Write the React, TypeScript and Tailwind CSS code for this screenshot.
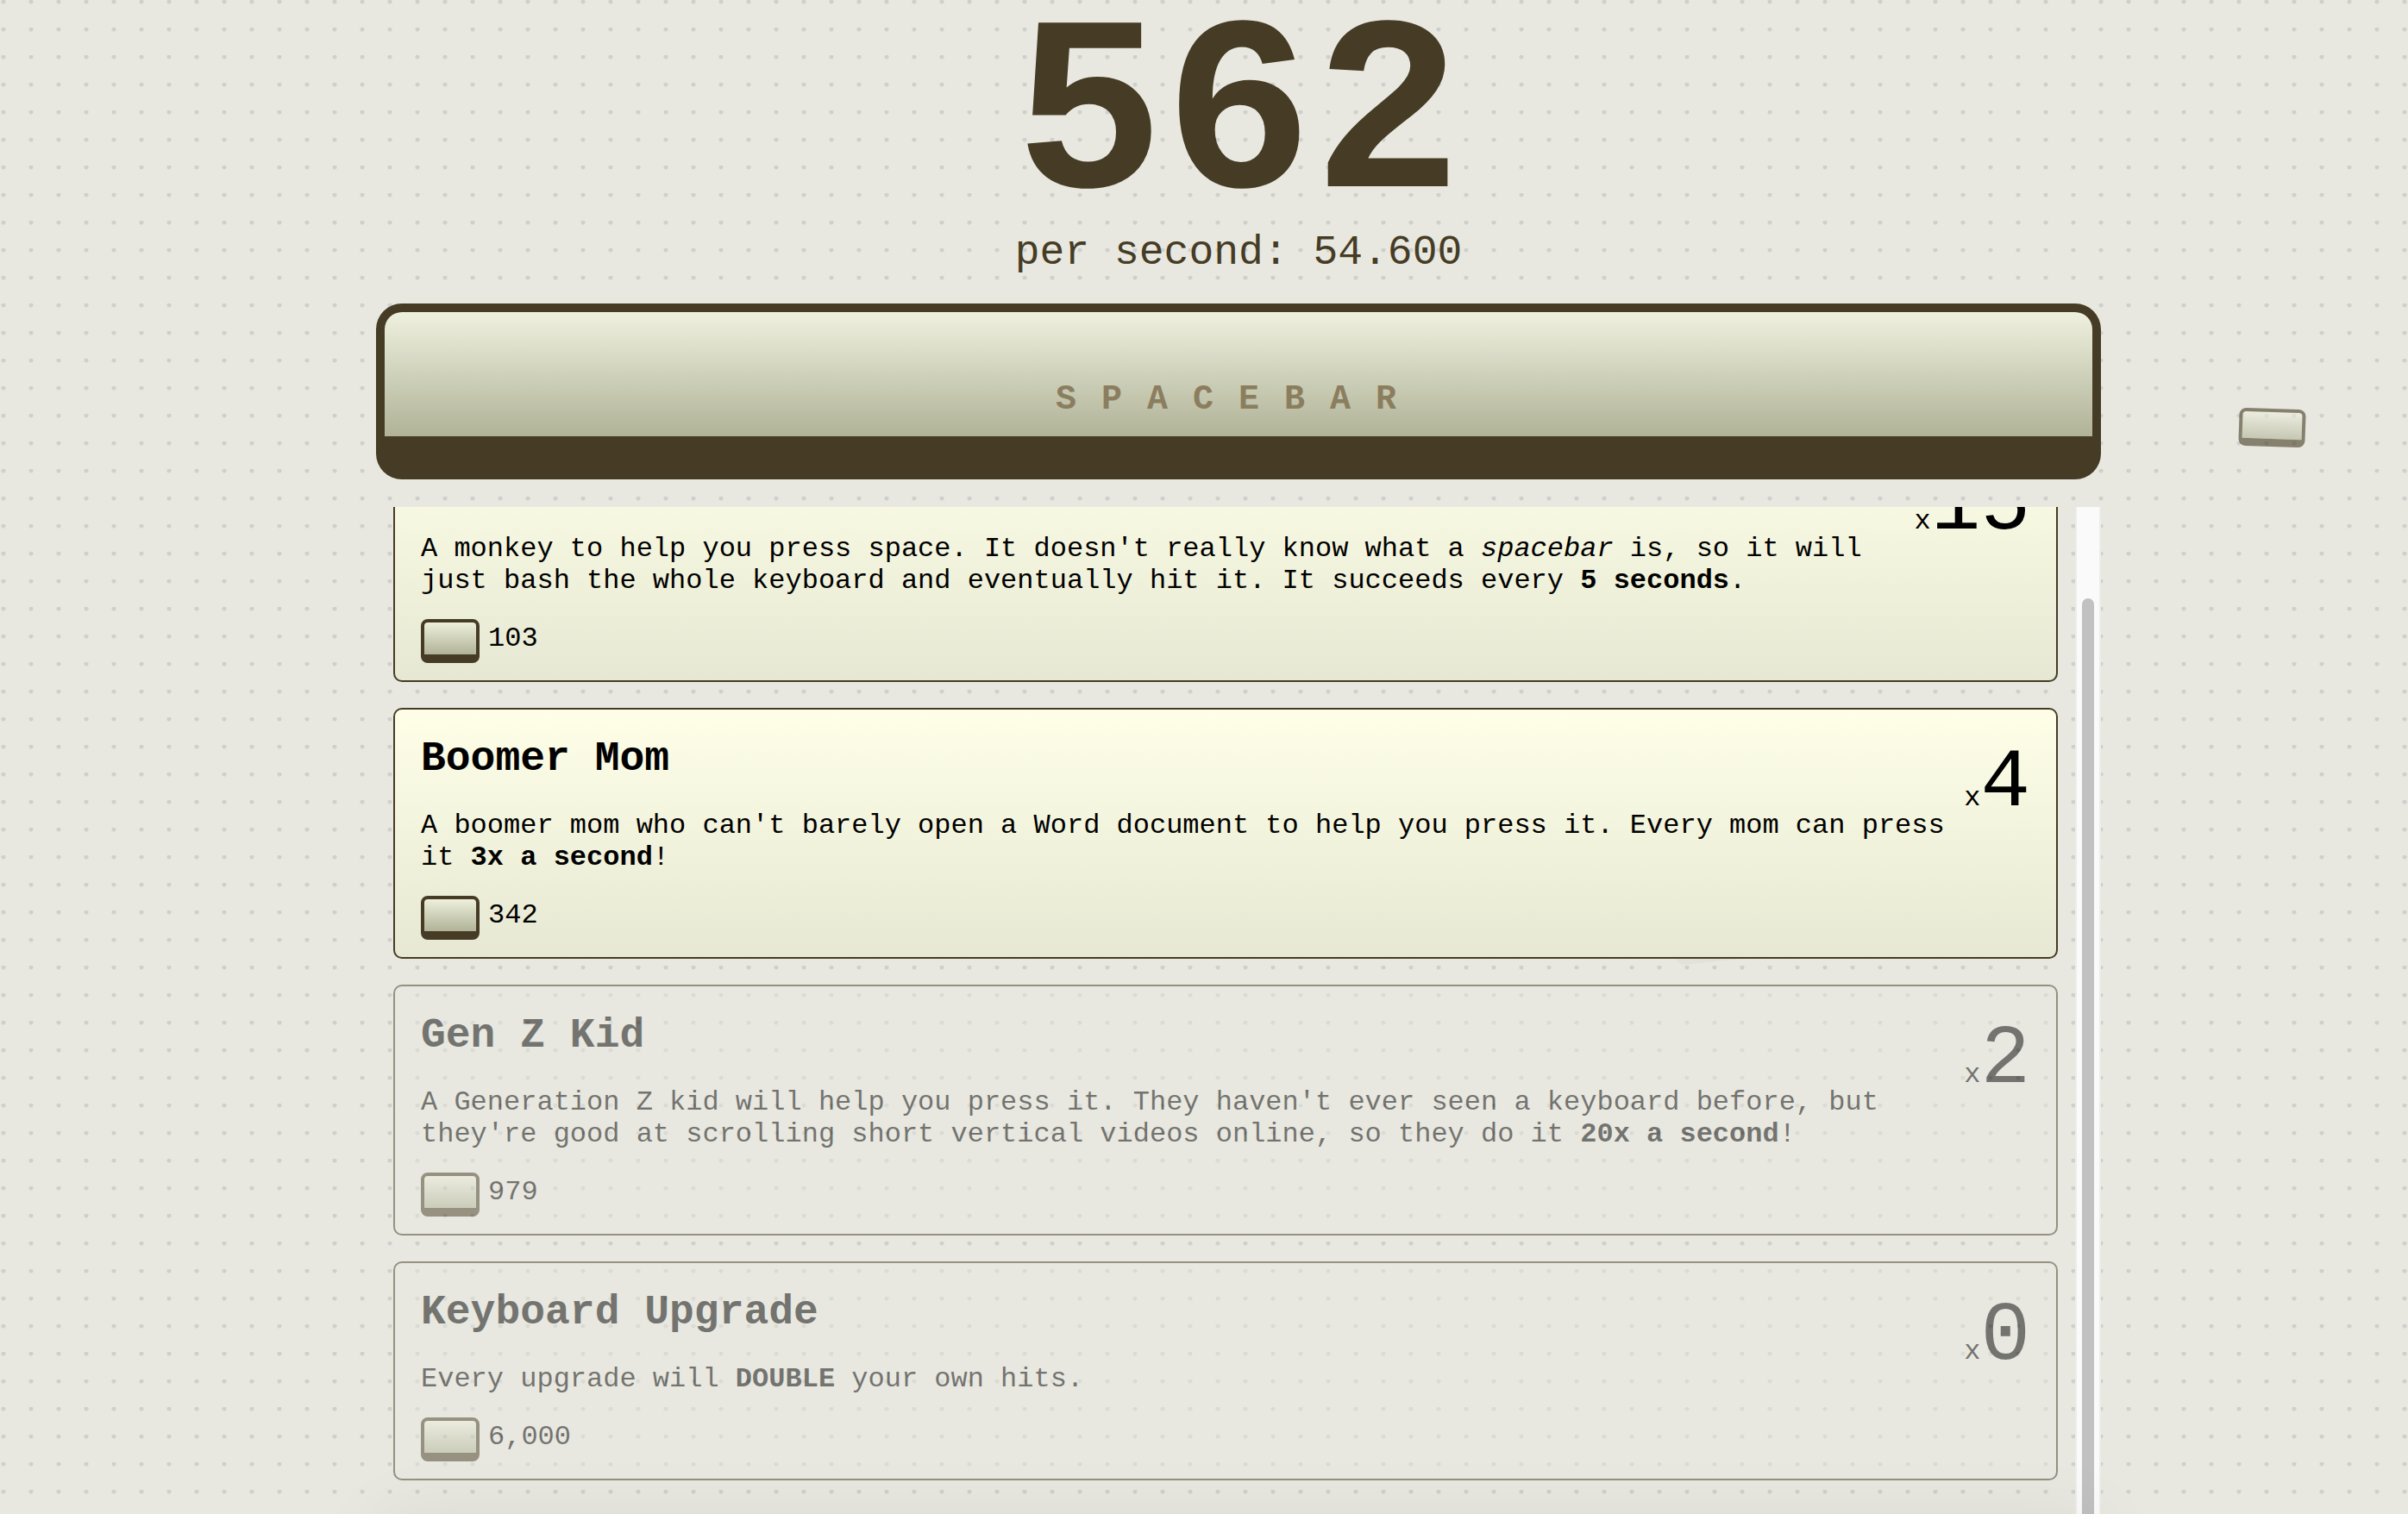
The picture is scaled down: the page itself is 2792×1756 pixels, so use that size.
import { useLayoutEffect, useRef, type ReactNode } from 'react';

type Item = {
  name: string;
  description: ReactNode;
  price: string;
  owned: number;
  affordable: boolean;
};

const items: Item[] = [
  {
    name: 'Monkey',
    description: (
      <>
        A monkey to help you press space. It doesn't really know what a <em>spacebar</em> is, so it
        will just bash the whole keyboard and eventually hit it. It succeeds every{' '}
        <strong>5 seconds</strong>.
      </>
    ),
    price: '103',
    owned: 15,
    affordable: true,
  },
  {
    name: 'Boomer Mom',
    description: (
      <>
        A boomer mom who can't barely open a Word document to help you press it. Every mom can press
        it <strong>3x a second</strong>!
      </>
    ),
    price: '342',
    owned: 4,
    affordable: true,
  },
  {
    name: 'Gen Z Kid',
    description: (
      <>
        A Generation Z kid will help you press it. They haven't ever seen a keyboard before, but
        they're good at scrolling short vertical videos online, so they do it{' '}
        <strong>20x a second</strong>!
      </>
    ),
    price: '979',
    owned: 2,
    affordable: false,
  },
  {
    name: 'Keyboard Upgrade',
    description: (
      <>
        Every upgrade will <strong>DOUBLE</strong> your own hits.
      </>
    ),
    price: '6,000',
    owned: 0,
    affordable: false,
  },
];

function KeyIcon() {
  return (
    <span className="block h-[51px] w-[68px] shrink-0 rounded-lg border-4 border-b-[10px] border-[#463c25] bg-linear-to-b from-[#eef0dd] to-[#b0b397] bg-origin-padding" />
  );
}

function ItemCard({ item }: { item: Item }) {
  return (
    <button
      type="button"
      disabled={!item.affordable}
      className={
        item.affordable
          ? 'flex w-full items-start rounded-[10px] border-2 border-[#463c25] bg-linear-to-b from-[#ffffe8] to-[#e6e8d3] px-[30px] pt-[30px] pb-5 text-left text-black'
          : 'flex w-full items-start rounded-[10px] border-2 border-[#463c25] bg-[#e8e8e0] px-[30px] pt-[30px] pb-5 text-left text-black opacity-50'
      }
    >
      <span className="block min-w-0 flex-1">
        <span className="block text-[48px] leading-[54px] font-bold">{item.name}</span>
        <span className="mt-8 block text-[32px] leading-[37px]">{item.description}</span>
        <span className="mt-[26px] flex items-start gap-[10px]">
          <KeyIcon />
          <span className="text-[32px] leading-[46px]">{item.price}</span>
        </span>
      </span>
      <span className="flex shrink-0 items-baseline text-[32px] leading-[112px]">
        x<span className="text-[96px]">{item.owned}</span>
      </span>
    </button>
  );
}

export default function App() {
  const listRef = useRef<HTMLDivElement>(null);

  useLayoutEffect(() => {
    if (listRef.current) listRef.current.scrollTop = 108;
  }, []);

  return (
    <div className="relative flex h-screen flex-col overflow-hidden bg-[#e8e8e0] bg-[radial-gradient(circle_at_4px_2px,#cfcfcd_2px,transparent_3px)] bg-size-[32px_32px] pl-20 font-['Courier_New','Liberation_Mono',monospace] text-[#463c25]">
      <span className="absolute top-[1072px] left-[1942px] block h-[44px] w-[77px] -rotate-6 rounded-lg bg-[#463c25] opacity-3" />
      <main className="relative mx-auto flex min-h-0 w-full max-w-[2000px] flex-1 flex-col">
        <header className="pt-3 text-center">
          <h1 className="text-[288px] leading-[254px] font-bold">562</h1>
          <p className="text-[48px] leading-[54px]">per second: 54.600</p>
        </header>
        <button
          type="button"
          className="mt-8 flex h-[204px] shrink-0 items-center justify-center rounded-[30px] border-10 border-b-50 border-[#463c25] bg-linear-to-b from-[#eff1df] to-[#b0b397] pt-[60px] text-[40px] font-bold tracking-[29px] text-[#8b7e5f]"
        >
          SPACEBAR
        </button>
        <section className="mt-8 flex min-h-0 flex-1">
          <div
            ref={listRef}
            className="flex min-w-0 flex-1 flex-col gap-[30px] overflow-y-auto px-5 pt-5 pb-20 [scrollbar-width:none]"
          >
            {items.map((item) => (
              <ItemCard key={item.name} item={item} />
            ))}
          </div>
          <div className="w-[30px] border-x-2 border-[#ececea] bg-[#fafafa] px-[6px] pt-[106px]">
            <div className="h-full rounded-t-full bg-[#c1c1c1]" />
          </div>
        </section>
        <div className="absolute inset-x-0 top-full h-20 shadow-[0_0_80px_rgba(0,0,0,0.06)]" />
      </main>
      <span className="absolute top-[474px] right-[119px] block h-[44px] w-[77px] rotate-2 rounded-lg border-4 border-b-[9px] border-[#463c25] bg-linear-to-b from-[#eff1df] to-[#b0b397] opacity-60" />
    </div>
  );
}
